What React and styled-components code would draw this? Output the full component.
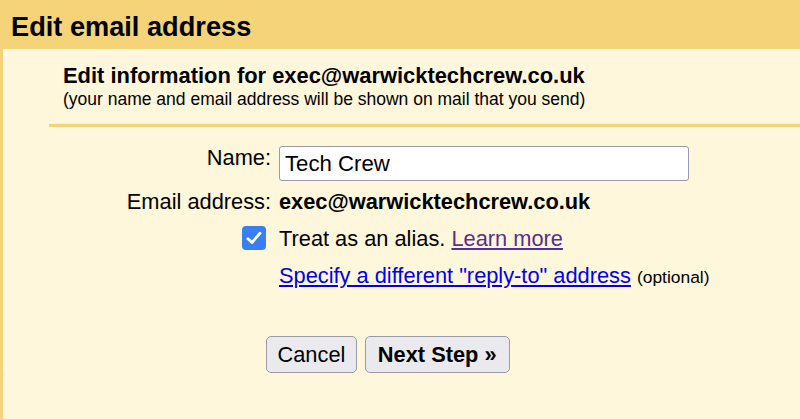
import React from "react";
import styled, { createGlobalStyle } from "styled-components";

const Global = createGlobalStyle`
  html, body, #root { height: 100%; }
  body {
    margin: 0;
    background: #fef7db;
    font-family: "Liberation Sans", Arial, Helvetica, sans-serif;
    color: #000;
  }
`;

const Page = styled.div`
  min-height: 100%;
  display: flex;
  flex-direction: column;
`;

const Header = styled.div`
  height: 49px;
  box-sizing: border-box;
  padding: 4px 0 0 11px;
  background: #f4d379;
`;

const Title = styled.h1`
  margin: 0;
  font-size: 27.2px;
  line-height: 45px;
  font-weight: bold;
`;

const Body = styled.div`
  flex: 1;
  border-left: 3px solid #f4d379;
`;

const Inner = styled.div`
  min-height: 100%;
  border-left: 4px solid #fff9e4;
`;

const Intro = styled.div`
  padding: 13.5px 0 0 56px;
`;

const Heading = styled.div`
  font-size: 21.9px;
  line-height: 25px;
  font-weight: bold;
`;

const Sub = styled.div`
  font-size: 17.5px;
  line-height: 22px;
`;

const Rule = styled.div`
  margin: 14.5px 0 0 42px;
  height: 3px;
  background: #f4d379;
`;

const Form = styled.div`
  display: flex;
  flex-direction: column;
  padding-top: 19px;
`;

const Row = styled.div`
  display: flex;
  align-items: flex-start;
  gap: 8px;
  margin-top: ${(p) => p.$gap || 0}px;
  font-size: 21.8px;
  line-height: 25px;
`;

const Label = styled.div`
  width: 264px;
  flex: none;
  text-align: right;
  margin-top: ${(p) => p.$shift || 0}px;
  display: flex;
  justify-content: flex-end;
`;

const Value = styled.div`
  font-weight: ${(p) => (p.$bold ? "bold" : "normal")};
`;

const Input = styled.input`
  width: 410px;
  height: 35px;
  box-sizing: border-box;
  border: 1.5px solid #9b9bab;
  border-radius: 3px;
  background: #fff;
  padding: 0 5px;
  font-family: inherit;
  font-size: 22.2px;
  color: #000;
  outline: none;
`;

const Check = styled.span`
  width: 24px;
  height: 24px;
  margin: 0 5px 0 0;
  border-radius: 4px;
  background: #3a7ff2;
  display: flex;
  align-items: center;
  justify-content: center;
`;

const Link = styled.a`
  color: ${(p) => (p.$visited ? "#56308f" : "#0000ee")};
  text-decoration: underline;
  text-underline-offset: 2px;
  cursor: pointer;
`;

const Small = styled.span`
  font-size: 17.4px;
`;

const Buttons = styled.div`
  display: flex;
  gap: 8px;
  padding: 46px 0 0 259px;
`;

const Button = styled.button`
  height: 37px;
  box-sizing: border-box;
  padding: 0 ${(p) => (p.$primary ? 12 : 10.5)}px;
  border: 1px solid #9a9aa6;
  border-radius: 5px;
  background: #e9e9ee;
  font-family: inherit;
  font-size: 21.8px;
  line-height: 25px;
  font-weight: ${(p) => (p.$primary ? "bold" : "normal")};
  color: #000;
`;

export default function App() {
  return (
    <Page>
      <Global />
      <Header>
        <Title>Edit email address</Title>
      </Header>
      <Body>
        <Inner>
          <Intro>
            <Heading>Edit information for exec@warwicktechcrew.co.uk</Heading>
            <Sub>(your name and email address will be shown on mail that you send)</Sub>
          </Intro>
          <Rule />
          <Form>
            <Row>
              <Label $shift={-1}>Name:</Label>
              <Input defaultValue="Tech Crew" />
            </Row>
            <Row $gap={8}>
              <Label>Email address:</Label>
              <Value $bold>exec@warwicktechcrew.co.uk</Value>
            </Row>
            <Row $gap={12}>
              <Label>
                <Check>
                  <svg width="16" height="14" viewBox="0 0 15 13">
                    <path
                      d="M1.8 7.2 L5.6 10.8 L13.2 2"
                      fill="none"
                      stroke="#fff"
                      strokeWidth="2.6"
                      strokeLinecap="round"
                      strokeLinejoin="round"
                    />
                  </svg>
                </Check>
              </Label>
              <Value>
                Treat as an alias. <Link $visited>Learn more</Link>
              </Value>
            </Row>
            <Row $gap={12}>
              <Label />
              <Value>
                <Link>Specify a different "reply-to" address</Link> <Small>(optional)</Small>
              </Value>
            </Row>
          </Form>
          <Buttons>
            <Button>Cancel</Button>
            <Button $primary>Next Step »</Button>
          </Buttons>
        </Inner>
      </Body>
    </Page>
  );
}
